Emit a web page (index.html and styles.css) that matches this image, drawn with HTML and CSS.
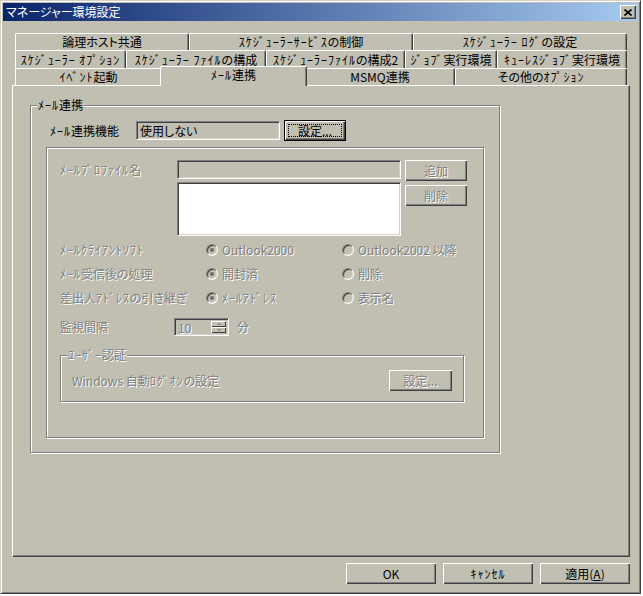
FILE: index.html
```html
<!DOCTYPE html>
<html lang="ja">
<head>
    <meta charset="UTF-8">
    <title>マネージャー環境設定</title>
    <link rel="stylesheet" href="styles.css">
</head>
<body>
    <div class="window">
        <div class="titlebar">
            <span class="title">マネージャー環境設定</span>
            <button class="close-btn">
                <svg width="8" height="7" viewBox="0 0 8 7"><path d="M0.5 0.5 L7.5 6.5 M7.5 0.5 L0.5 6.5" stroke="#000" stroke-width="1.6" fill="none"/></svg>
            </button>
        </div>

        <div class="dialog">
            <div class="tabs">
                <div class="tab-row row1">
                    <div class="tab">論理ホスト共通</div>
                    <div class="tab"><span class="hw">ｽｹｼﾞｭｰﾗｰｻｰﾋﾞｽ</span>の制御</div>
                    <div class="tab"><span class="hw">ｽｹｼﾞｭｰﾗｰ ﾛｸﾞ</span>の設定</div>
                </div>
                <div class="tab-row row2">
                    <div class="tab"><span class="hw">ｽｹｼﾞｭｰﾗｰ ｵﾌﾟｼｮﾝ</span></div>
                    <div class="tab"><span class="hw">ｽｹｼﾞｭｰﾗｰ ﾌｧｲﾙ</span>の構成</div>
                    <div class="tab"><span class="hw">ｽｹｼﾞｭｰﾗｰﾌｧｲﾙ</span>の構成2</div>
                    <div class="tab"><span class="hw">ｼﾞｮﾌﾞ</span>実行環境</div>
                    <div class="tab"><span class="hw">ｷｭｰﾚｽｼﾞｮﾌﾞ</span>実行環境</div>
                </div>
                <div class="tab-row row3">
                    <div class="tab"><span class="hw">ｲﾍﾞﾝﾄ</span>起動</div>
                    <div class="tab active"><span class="hw">ﾒｰﾙ</span>連携</div>
                    <div class="tab">MSMQ連携</div>
                    <div class="tab">その他の<span class="hw">ｵﾌﾟｼｮﾝ</span></div>
                </div>
            </div>

            <div class="panel">
                <div class="group mail-group">
                    <span class="group-label"><span class="hw">ﾒｰﾙ</span>連携</span>

                    <div class="func-row">
                        <span class="func-label"><span class="hw">ﾒｰﾙ</span>連携機能</span>
                        <div class="field readonly-field">使用しない</div>
                        <button class="btn default-btn"><span class="focus">設定...</span></button>
                    </div>

                    <div class="inner-box">
                        <div class="profile-row">
                            <span class="profile-label dis"><span class="hw">ﾒｰﾙﾌﾟﾛﾌｧｲﾙ</span>名</span>
                            <div class="profile-fields">
                                <div class="field profile-field"></div>
                                <div class="field listbox"></div>
                            </div>
                            <div class="profile-buttons">
                                <button class="btn side-btn dis">追加</button>
                                <button class="btn side-btn dis">削除</button>
                            </div>
                        </div>

                        <div class="options">
                            <span class="dis hw">ﾒｰﾙｸﾗｲｱﾝﾄｿﾌﾄ</span>
                            <span class="opt"><span class="radio checked"></span><span class="dis">Outlook2000</span></span>
                            <span class="opt"><span class="radio"></span><span class="dis">Outlook2002 以降</span></span>

                            <span class="dis"><span class="hw">ﾒｰﾙ</span>受信後の処理</span>
                            <span class="opt"><span class="radio checked"></span><span class="dis">開封済</span></span>
                            <span class="opt"><span class="radio"></span><span class="dis">削除</span></span>

                            <span class="dis">差出人<span class="hw">ｱﾄﾞﾚｽ</span>の引き継ぎ</span>
                            <span class="opt"><span class="radio checked"></span><span class="dis hw">ﾒｰﾙｱﾄﾞﾚｽ</span></span>
                            <span class="opt"><span class="radio"></span><span class="dis">表示名</span></span>
                        </div>

                        <div class="interval-row">
                            <span class="interval-label dis">監視間隔</span>
                            <div class="field spin">
                                <span class="spin-value dis">10</span>
                                <div class="spin-buttons">
                                    <span class="spin-btn"><span class="arrow-up"></span></span>
                                    <span class="spin-btn"><span class="arrow-down"></span></span>
                                </div>
                            </div>
                            <span class="unit dis">分</span>
                        </div>

                        <div class="group auth-group">
                            <span class="group-label dis"><span class="hw">ﾕｰｻﾞｰ</span>認証</span>
                            <div class="auth-row">
                                <span class="dis">Windows 自動<span class="hw">ﾛｸﾞｵﾝ</span>の設定</span>
                                <button class="btn auth-btn dis">設定...</button>
                            </div>
                        </div>
                    </div>
                </div>
            </div>

            <div class="footer">
                <button class="btn footer-btn">OK</button>
                <button class="btn footer-btn"><span class="hw">ｷｬﾝｾﾙ</span></button>
                <button class="btn footer-btn">適用(<u>A</u>)</button>
            </div>
        </div>
    </div>
</body>
</html>
```

FILE: styles.css
```css
* {
    box-sizing: border-box;
}
body {
    margin: 0;
    background: #fff;
    font-family: "Noto Sans CJK JP", "Noto Sans", sans-serif;
    font-size: 12px;
    line-height: 14px;
    font-feature-settings: "palt";
    color: #000;
}
.hw {
    letter-spacing: 1px;
}
.window {
    width: 641px;
    height: 594px;
    background: #c1beb2;
    border: 1px solid;
    border-color: #d4d0c8 #404040 #404040 #d4d0c8;
    box-shadow: inset 1px 1px #fff, inset -1px -1px #808080;
    padding: 2px;
    display: flex;
    flex-direction: column;
}
.titlebar {
    height: 18px;
    background: linear-gradient(to right, #0a246a, #a6caf0);
    color: #fff;
    display: flex;
    align-items: center;
    justify-content: space-between;
    padding: 0 2px 0 3px;
}
.title {
    line-height: 18px;
}
.close-btn {
    width: 16px;
    height: 14px;
    padding: 0;
    border: none;
    background: #c1beb2;
    box-shadow: inset 1px 1px #fff, inset -1px -1px #404040, inset -2px -2px #808080;
    display: flex;
    align-items: center;
    justify-content: center;
}
.dialog {
    flex: 1;
    padding: 12px 8px 7px 9px;
    display: flex;
    flex-direction: column;
}

/* tabs */
.tabs {
    margin-left: 3px;
    width: 612px;
}
.tab-row {
    display: grid;
}
.row1 {
    grid-template-columns: 174px 224px 214px;
    height: 17px;
}
.row2 {
    grid-template-columns: 111px 140px 139px 92px 130px;
    height: 18px;
}
.row3 {
    grid-template-columns: 147px 143px 150px 172px;
    height: 17px;
}
.tab {
    background: #c1beb2;
    border-top: 1px solid #fff;
    border-left: 1px solid #fff;
    border-right: 1px solid #404040;
    box-shadow: inset -1px 0 #808080;
    border-radius: 2px 2px 0 0;
    display: flex;
    align-items: center;
    justify-content: center;
    white-space: nowrap;
}
.tab.active {
    margin: -2px -2px -1px;
    padding-bottom: 3px;
    position: relative;
    z-index: 1;
}

/* panel */
.panel {
    height: 472px;
    border: 1px solid;
    border-color: #fff #404040 #404040 #fff;
    box-shadow: inset -1px -1px #808080;
    padding: 19px 0 0 17px;
}
.group {
    position: relative;
    border: 1px solid #808080;
    box-shadow: inset 1px 1px #fff, 1px 1px #fff;
}
.group-label {
    position: absolute;
    top: -8px;
    left: 6px;
    padding: 0 1px;
    background: #c1beb2;
}
.mail-group {
    width: 470px;
    height: 348px;
    padding: 14px 0 0 15px;
}
.func-row {
    display: flex;
    align-items: center;
    height: 21px;
    padding-left: 4px;
}
.func-label {
    width: 86px;
}
.field {
    height: 19px;
    border: 1px solid;
    border-color: #808080 #fff #fff #808080;
    box-shadow: inset 1px 1px #404040, inset -1px -1px #d4d0c8;
    background: #c1beb2;
}
.readonly-field {
    width: 144px;
    padding: 2px 0 0 3px;
    line-height: 14px;
}

/* buttons */
.btn {
    font-family: inherit;
    font-size: 12px;
    font-weight: normal;
    color: #000;
    background: #c1beb2;
    border: none;
    padding: 0;
    height: 21px;
    box-shadow: inset 1px 1px #fff, inset -1px -1px #404040, inset -2px -2px #808080;
}
.default-btn {
    width: 62px;
    margin-left: 4px;
    border: 1px solid #000;
    padding: 3px;
    display: flex;
}
.focus {
    flex: 1;
    border: 1px dotted #000;
    display: flex;
    align-items: center;
    justify-content: center;
}
.side-btn {
    width: 62px;
}
.auth-btn {
    width: 63px;
}
.footer-btn {
    width: 90px;
}
.dis {
    color: #808080;
    text-shadow: 1px 1px 0 #fff;
}

/* disabled inner box */
.inner-box {
    margin-top: 6px;
    width: 438px;
    height: 291px;
    border: 1px solid #808080;
    box-shadow: inset 1px 1px #fff, 1px 1px #fff;
    padding: 12px 0 0 13px;
}
.profile-row {
    display: flex;
}
.profile-label {
    width: 117px;
    line-height: 19px;
}
.profile-fields {
    width: 224px;
    display: flex;
    flex-direction: column;
    gap: 3px;
}
.listbox {
    height: 54px;
    background: #fff;
}
.profile-buttons {
    margin-left: 4px;
    display: flex;
    flex-direction: column;
    gap: 4px;
}
.options {
    margin-top: 2px;
    display: grid;
    grid-template-columns: 146px 136px auto;
    grid-auto-rows: 24px;
    align-items: center;
}
.opt {
    display: flex;
    align-items: center;
}
.radio {
    width: 12px;
    height: 12px;
    margin-right: 4px;
    border-radius: 50%;
    border: 1px solid;
    border-color: #808080 #fff #fff #808080;
    box-shadow: inset 1px 1px #404040, inset -1px -1px #d4d0c8;
    background: #c1beb2;
    display: flex;
    align-items: center;
    justify-content: center;
}
.radio.checked::after {
    content: "";
    width: 4px;
    height: 4px;
    border-radius: 50%;
    background: #6a6a6a;
}
.interval-row {
    margin-top: 7px;
    height: 20px;
    display: flex;
    align-items: center;
}
.interval-label {
    width: 114px;
}
.spin {
    width: 55px;
    height: 18px;
    display: flex;
    padding: 2px 2px 2px 3px;
}
.spin-value {
    flex: 1;
    line-height: 14px;
}
.spin-buttons {
    width: 15px;
    display: flex;
    flex-direction: column;
}
.spin-btn {
    flex: 1;
    background: #c1beb2;
    box-shadow: inset 1px 1px #fff, inset -1px -1px #404040;
    display: flex;
    align-items: center;
    justify-content: center;
}
.arrow-up {
    border: 2px solid transparent;
    border-top: none;
    border-bottom: 2px solid #808080;
}
.arrow-down {
    border: 2px solid transparent;
    border-bottom: none;
    border-top: 2px solid #808080;
}
.unit {
    margin-left: 8px;
}
.auth-group {
    margin-top: 18px;
    width: 404px;
    height: 47px;
}
.auth-row {
    margin-top: 14px;
    height: 21px;
    padding: 0 11px 0 11px;
    display: flex;
    align-items: center;
    justify-content: space-between;
}

/* bottom buttons */
.footer {
    margin-top: 6px;
    display: flex;
    justify-content: flex-end;
    gap: 7px;
}
```
